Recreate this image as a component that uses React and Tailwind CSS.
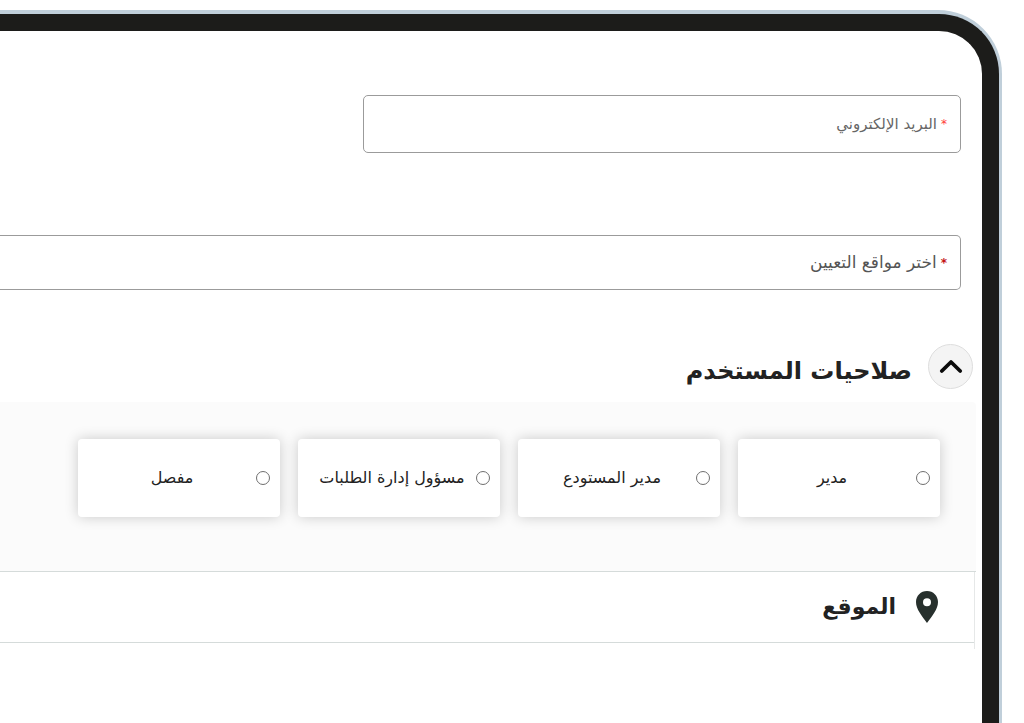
import React, { useState } from 'react';

const roles = [
  { id: 'manager', label: 'مدير' },
  { id: 'warehouse', label: 'مدير المستودع' },
  { id: 'orders', label: 'مسؤول إدارة الطلبات' },
  { id: 'cutter', label: 'مفصل' },
];

const ChevronUp = () => (
  <svg viewBox="0 0 24 18" className="h-[18px] w-6" fill="none" aria-hidden="true">
    <path
      d="M2.8 13 L12 4 L21.2 13"
      stroke="#0b0b0b"
      strokeWidth="3.8"
      strokeLinecap="round"
      strokeLinejoin="round"
    />
  </svg>
);

const PinIcon = () => (
  <svg viewBox="0 0 22 32" className="h-8 w-[22px] shrink-0" aria-hidden="true">
    <path
      fillRule="evenodd"
      fill="#27302d"
      d="M11 0C4.8 0 0 4.8 0 11c0 3.6 1.4 6.9 3.6 10.6C5.8 25.2 8.7 29 11 32c2.3-3 5.2-6.8 7.4-10.4C20.6 17.9 22 14.6 22 11 22 4.8 17.2 0 11 0Zm0 7.2a4 4 0 1 1 0 8 4 4 0 0 1 0-8Z"
    />
  </svg>
);

const App = () => {
  const [open, setOpen] = useState(true);
  const [role, setRole] = useState('');

  return (
    <div
      dir="rtl"
      className="flex min-h-screen flex-col bg-white pt-[10px] pr-[22px] font-['DejaVu_Sans',sans-serif] text-[#222222]"
    >
      <div className="flex flex-1 flex-col rounded-tr-[64px] border-t-4 border-r-[3px] border-[#c0cfda] bg-[#c0cfda]">
        <main className="flex-1 rounded-tr-[60px] border-t-[17px] border-r-[17px] border-[#1c1c1a] bg-white pt-16">
          <div className="pr-[21px]">
            <div className="flex h-[58px] w-[598px] max-w-full items-center gap-2 rounded-[5px] border border-[#9b9b9b] px-[13px]">
              <label htmlFor="email" className="flex shrink-0 items-center gap-1 text-[15px] text-[#666666]">
                <span className="text-[12px] text-[#ff3b36]">*</span>
                <span>البريد الإلكتروني</span>
              </label>
              <input id="email" type="email" className="h-full min-w-0 flex-1 bg-transparent outline-none" />
            </div>

            <div className="mt-[82px] flex h-[55px] items-center gap-2 rounded-r-[5px] border-y border-r border-[#9b9b9b] px-[13px]">
              <label htmlFor="sites" className="flex shrink-0 items-center gap-1 text-[17px] text-[#555555]">
                <span className="text-[12px] font-bold text-[#c41414]">*</span>
                <span>اختر مواقع التعيين</span>
              </label>
              <select id="sites" className="h-full min-w-0 flex-1 appearance-none bg-transparent outline-none" />
            </div>
          </div>

          <div className="mt-[54px] flex items-center gap-4 pr-[9px]">
            <button
              type="button"
              aria-label="صلاحيات المستخدم"
              aria-expanded={open}
              onClick={() => setOpen(!open)}
              className="flex h-[45px] w-[45px] items-center justify-center rounded-full border border-[#dedede] bg-[#f4f4f4]"
            >
              <ChevronUp />
            </button>
            <h2 className="pt-2 text-[24px] leading-[32px] font-bold">صلاحيات المستخدم</h2>
          </div>

          <div className="mt-[13px] pr-[6px]">
            {open && (
              <div className="grid grid-cols-4 gap-[18px] rounded-tr bg-[#fbfbfb] pt-[37px] pr-9 pb-[54px] pl-[78px]">
                {roles.map((item) => (
                  <label
                    key={item.id}
                    className="flex h-[78px] items-center rounded-[4px] bg-white px-[10px] text-[16px] shadow-[0_0_14px_rgba(0,0,0,0.2)]"
                  >
                    <input
                      type="radio"
                      name="role"
                      value={item.id}
                      checked={role === item.id}
                      onChange={() => setRole(item.id)}
                      className="h-[14px] w-[14px] shrink-0 appearance-none rounded-full border border-[#6f6f6f] bg-white checked:bg-[#6f6f6f]"
                    />
                    <span className="flex-1 text-center whitespace-nowrap">{item.label}</span>
                  </label>
                ))}
              </div>
            )}
            <div className="border-t border-[#d5dbda]">
              <div className="mr-[1px] border-r border-[#e6e8e8] pb-[6px]">
                <div className="flex h-[71px] items-center gap-5 border-b border-[#d5dbda] pr-9">
                  <PinIcon />
                  <h2 className="text-[22px] leading-[32px] font-bold">الموقع</h2>
                </div>
              </div>
            </div>
          </div>
        </main>
      </div>
    </div>
  );
};

export default App;
